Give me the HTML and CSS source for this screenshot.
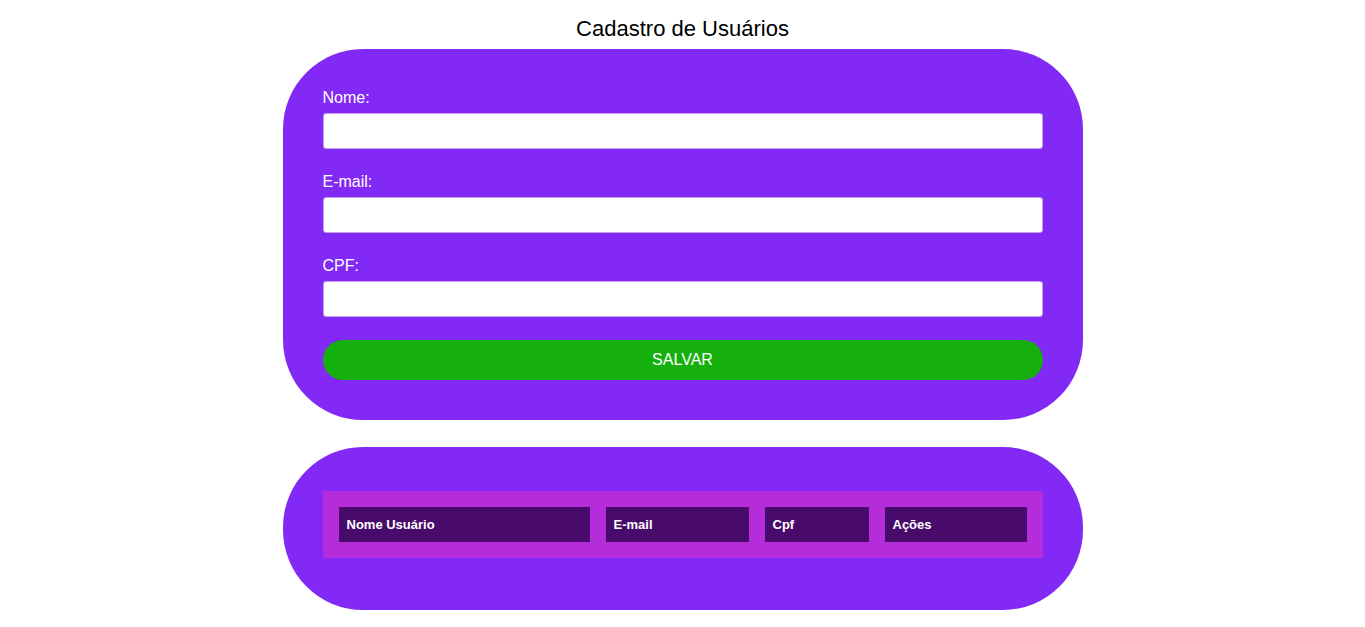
FILE: index.html
```html
<!DOCTYPE html>
<html lang="pt-BR">
<head>
<meta charset="utf-8">
<title>Cadastro de Usuários</title>
<link rel="stylesheet" href="styles.css">
</head>
<body>
<h1 class="title">Cadastro de Usuários</h1>
<main class="wrap">
  <form class="card form-card">
    <label class="label" for="nome">Nome:</label>
    <input class="input" id="nome" type="text">
    <label class="label" for="email">E-mail:</label>
    <input class="input" id="email" type="text">
    <label class="label" for="cpf">CPF:</label>
    <input class="input input-last" id="cpf" type="text">
    <button class="btn" type="button">SALVAR</button>
  </form>
  <section class="card table-card">
    <table class="users">
      <thead>
        <tr>
          <th class="c1">Nome Usuário</th>
          <th class="c2">E-mail</th>
          <th class="c3">Cpf</th>
          <th class="c4">Ações</th>
        </tr>
      </thead>
      <tbody></tbody>
    </table>
  </section>
</main>
</body>
</html>
```
FILE: styles.css
```css
html, body {
  margin: 0;
  padding: 0;
  background: #ffffff;
  font-family: "Liberation Sans", Arial, sans-serif;
}
.title {
  margin: 0;
  padding-top: 16px;
  font-size: 22px;
  line-height: 25px;
  font-weight: normal;
  text-align: center;
  color: #000;
}
.wrap {
  width: 800px;
  margin: 8px auto 0;
  display: flex;
  flex-direction: column;
  gap: 27px;
}
.card {
  background: #8329f5;
  border-radius: 80px;
}
.form-card {
  padding: 40px;
  display: flex;
  flex-direction: column;
}
.label {
  color: #fff;
  font-size: 16px;
  line-height: 18px;
  margin-bottom: 6px;
}
.input {
  box-sizing: border-box;
  height: 36px;
  margin: 0 0 24px;
  border: 1px solid #c79be6;
  border-radius: 3px;
  background: #fff;
  font-size: 16px;
  padding: 0 8px;
}
.input-last {
  margin-bottom: 23px;
}
.btn {
  height: 40px;
  border: none;
  border-radius: 20px;
  background: #15b00d;
  color: #fff;
  font-family: "Liberation Sans", Arial, sans-serif;
  font-size: 16px;
  padding: 0;
}
.table-card {
  padding: 44px 40px 52px;
}
.users {
  width: 720px;
  background: #b52ddb;
  border-spacing: 16px;
  table-layout: fixed;
}
.users th {
  background: #490b6b;
  color: #fff;
  font-size: 13px;
  font-weight: bold;
  text-align: left;
  height: 35px;
  padding: 0 8px;
  box-sizing: border-box;
}
.c1 { width: 251px; }
.c2 { width: 143px; }
.c3 { width: 104px; }
.c4 { width: 142px; }
```
